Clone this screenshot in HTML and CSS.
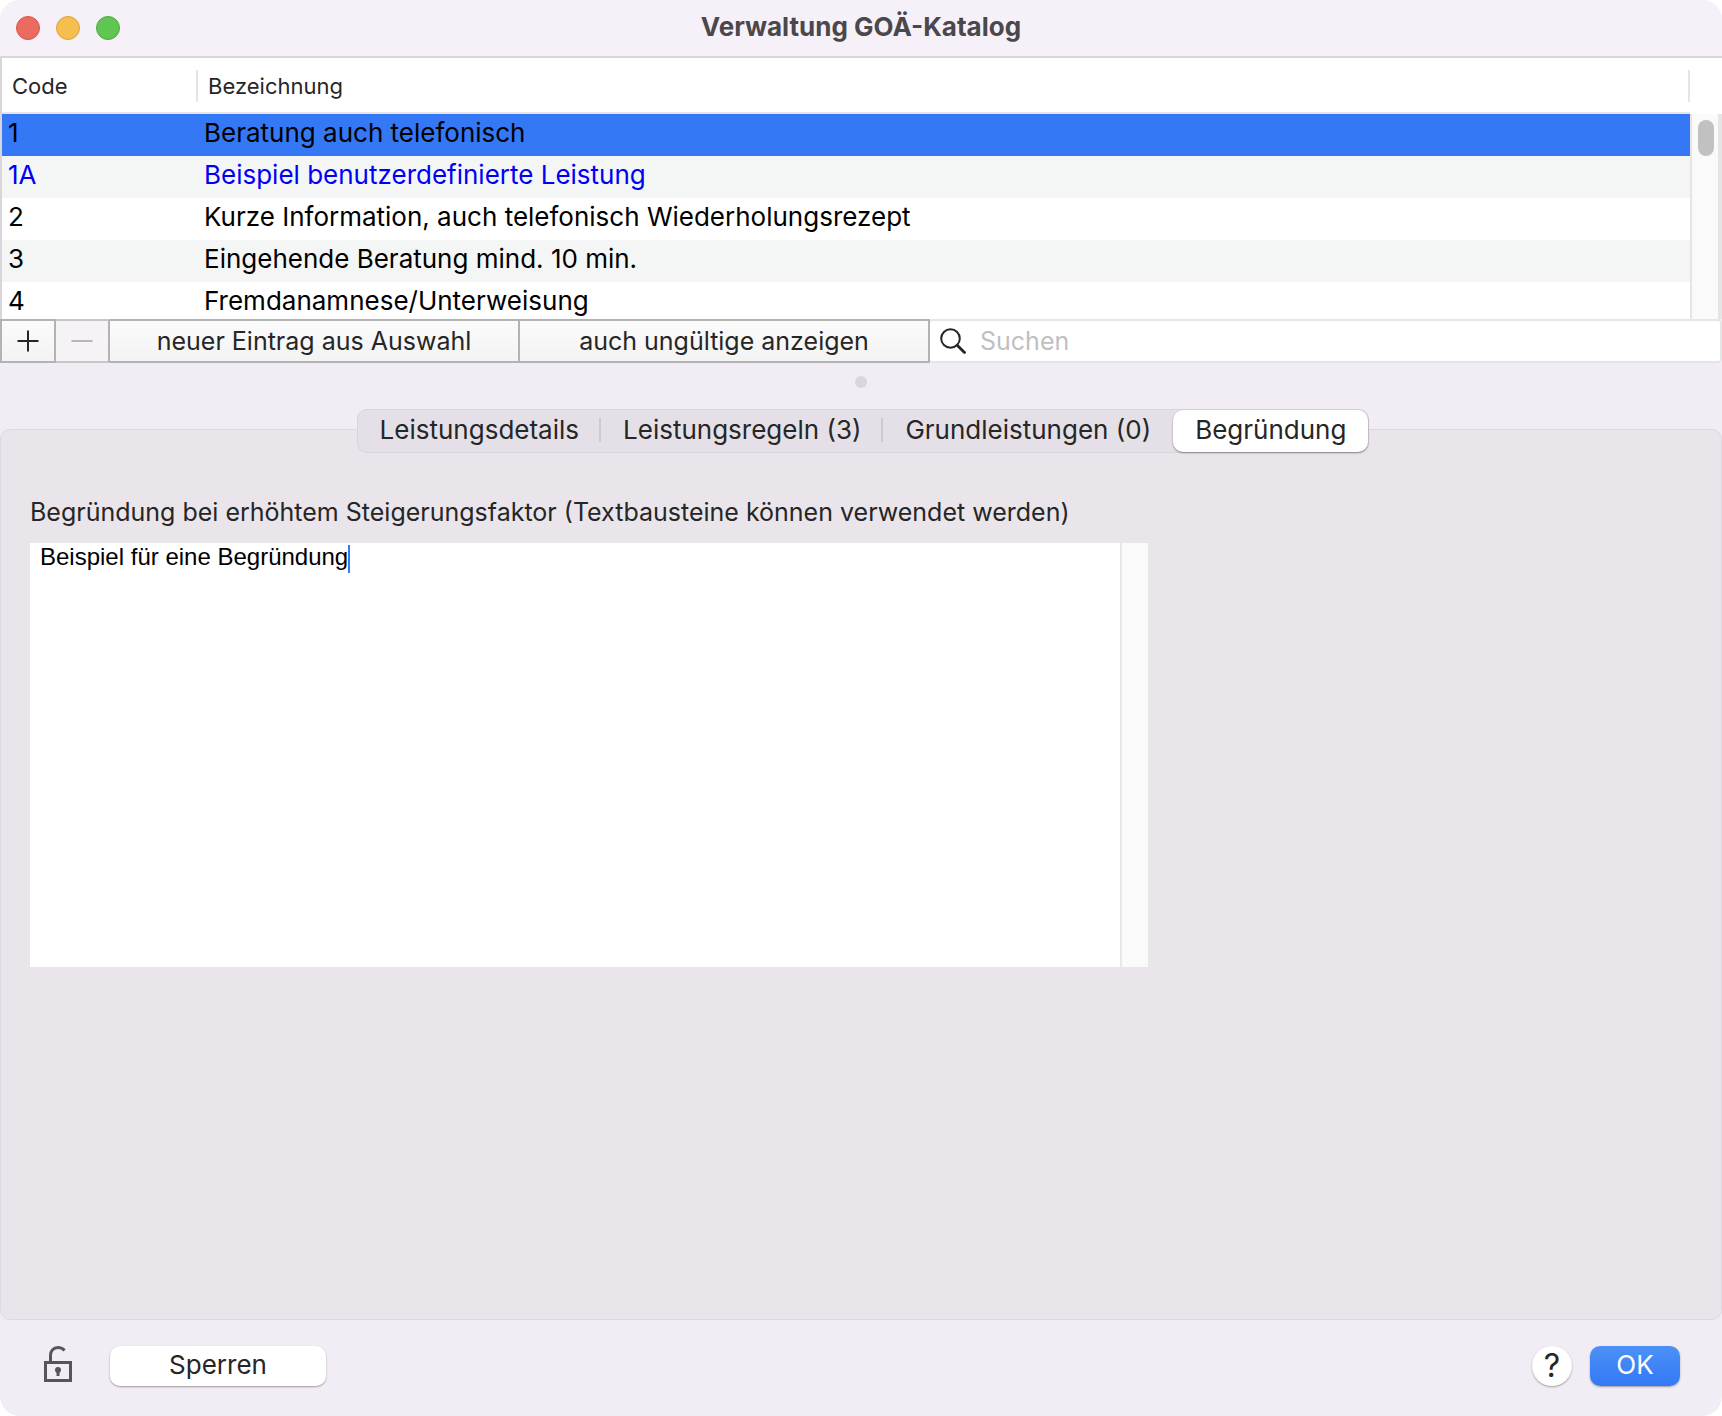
FILE: index.html
```html
<!DOCTYPE html>
<html lang="de">
<head>
<meta charset="utf-8">
<meta name="viewport" content="width=device-width, initial-scale=1">
<title>Verwaltung GOÄ-Katalog</title>
<link rel="stylesheet" href="styles.css">
</head>
<body>
<div class="window">
  <header class="titlebar">
    <div class="lights">
      <button class="light light-close" aria-label="Schließen"></button>
      <button class="light light-min" aria-label="Minimieren"></button>
      <button class="light light-zoom" aria-label="Zoomen"></button>
    </div>
    <h1 class="title">Verwaltung GOÄ-Katalog</h1>
  </header>

  <section class="list">
    <table class="catalog">
      <thead>
        <tr><th class="col-code" scope="col"><span>Code</span></th><th scope="col"><span>Bezeichnung</span></th></tr>
      </thead>
      <tbody>
        <tr class="selected"><td>1</td><td>Beratung auch telefonisch</td></tr>
        <tr class="custom"><td>1A</td><td>Beispiel benutzerdefinierte Leistung</td></tr>
        <tr><td>2</td><td>Kurze Information, auch telefonisch Wiederholungsrezept</td></tr>
        <tr><td>3</td><td>Eingehende Beratung mind. 10 min.</td></tr>
        <tr><td>4</td><td>Fremdanamnese/Unterweisung</td></tr>
      </tbody>
    </table>
    <div class="scroller"><div class="track"><div class="thumb"></div></div></div>
  </section>

  <div class="toolbar">
    <button class="tool tool-icon" aria-label="Hinzufügen">
      <svg width="22" height="22" viewBox="0 0 22 22"><path d="M11 0.500V21.500M0.500 11H21.500" stroke="#262626" stroke-width="2" fill="none"/></svg>
    </button>
    <button class="tool tool-icon tool-off" aria-label="Entfernen" disabled>
      <svg width="22" height="22" viewBox="0 0 22 22"><path d="M0.500 11H21.500" stroke="#b9b6bb" stroke-width="2" fill="none"/></svg>
    </button>
    <button class="tool tool-text">neuer Eintrag aus Auswahl</button>
    <button class="tool tool-text">auch ungültige anzeigen</button>
    <label class="search">
      <svg width="26" height="26" viewBox="0 0 26 26"><circle cx="10.500" cy="10.500" r="9.300" fill="none" stroke="#262626" stroke-width="2"/><path d="M17.200 17.200L24.500 24.500" stroke="#262626" stroke-width="2.800" stroke-linecap="round"/></svg>
      <input type="search" placeholder="Suchen" aria-label="Suchen">
    </label>
  </div>

  <div class="splitter"><span class="grip"></span></div>

  <div class="tabs" role="tablist">
    <button class="tab" role="tab">Leistungsdetails</button>
    <button class="tab" role="tab">Leistungsregeln (3)</button>
    <button class="tab" role="tab">Grundleistungen (0)</button>
    <button class="tab tab-active" role="tab" aria-selected="true">Begründung</button>
  </div>

  <main class="panel" role="tabpanel">
    <label class="caption" for="reason">Begründung bei erhöhtem Steigerungsfaktor (Textbausteine können verwendet werden)</label>
    <div class="editor">
      <textarea id="reason" class="reason" spellcheck="false">Beispiel für eine Begründung</textarea>
      <div class="editor-track"></div>
      <span class="caret"></span>
    </div>
  </main>

  <footer class="footer">
    <svg class="lock" width="28" height="36" viewBox="0 0 28 36">
      <path d="M6.500 16V9.500C6.500 5 9.500 1.500 14 1.500C17 1.500 19 2.600 20.500 4.500" fill="none" stroke="#575558" stroke-width="3"/>
      <rect x="1.500" y="16.500" width="25" height="18" fill="none" stroke="#575558" stroke-width="3"/>
      <circle cx="14" cy="24" r="3" fill="#575558"/><path d="M12.500 24H15.500V30H12.500Z" fill="#575558"/>
    </svg>
    <button class="push">Sperren</button>
    <button class="help" aria-label="Hilfe">?</button>
    <button class="push push-default">OK</button>
  </footer>
</div>
</body>
</html>
```
FILE: styles.css
```css
* { box-sizing: border-box; }

body {
  margin: 0;
  background: #fff;
  color: #262626;
  font: 26px/30px Inter, "Liberation Sans", sans-serif;
}

button, input { margin: 0; padding: 0; border: 0; font: inherit; color: inherit; }

.window {
  display: flex;
  flex-direction: column;
  min-height: 100vh;
  overflow: hidden;
  border-radius: 20px;
  background: #f2edf4;
}

/* Title bar */
.titlebar {
  display: grid;
  grid-template-columns: 1fr auto 1fr;
  align-items: center;
  height: 58px;
  padding: 0 16px;
  border-bottom: 2px solid #dad4dc;
  background: #f6f1f8;
}
.lights { display: flex; gap: 16px; }
.light { width: 24px; height: 24px; border: 1px solid; border-radius: 50%; }
.light-close { background: #ed6a5e; border-color: #d8564b; }
.light-min { background: #f5bf4f; border-color: #dba43c; }
.light-zoom { background: #61c554; border-color: #4faa41; }
.title { margin: 0; padding-bottom: 2px; font-size: 26px; line-height: 30px; font-weight: 700; color: #4b484c; }

/* Catalogue list */
.list {
  display: flex;
  height: 261px;
  overflow: hidden;
  border-left: 2px solid #dad4dc;
  background: #fff;
}
.catalog { flex: 1; align-self: flex-start; table-layout: fixed; border-spacing: 0; color: #000; }
.catalog th {
  height: 56px;
  padding: 2px 0 0;
  border-bottom: 2px solid #e5e5e5;
  text-align: left;
  font-size: 22px;
  font-weight: 400;
  color: #262626;
}
.catalog th span { display: block; padding-left: 10px; border-right: 2px solid #e5e5e5; line-height: 32px; }
.col-code { width: 196px; }
.catalog td { height: 42px; padding: 0 0 4px 6px; line-height: 38px; }
.catalog tr:nth-child(even) td { background: #f4f5f5; }
.catalog .selected td { background: #3478f6; }
.custom { color: #0000f5; }
.scroller { width: 32px; padding-top: 56px; }
.track {
  height: 100%;
  padding: 6px;
  border: solid #e5e5e5;
  border-width: 0 4px 0 2px;
  background: #fafafa;
}
.thumb { width: 16px; height: 36px; border-radius: 8px; background: #c1c1c1; }

/* Toolbar below the list */
.toolbar { display: flex; height: 44px; font-size: 25px; }
.tool {
  display: grid;
  place-items: center;
  border: 2px solid #b3b3b3;
  background: linear-gradient(#fbfbfb, #f3f3f3);
}
.tool + .tool { border-left-width: 0; }
.tool-icon { width: 56px; }
.tool-off { width: 54px; border-color: #c9c6ca #b3b3b3 #c9c6ca; background: #f6f3f7; }
.tool-text { width: 410px; }
.search {
  display: flex;
  flex: 1;
  align-items: center;
  gap: 14px;
  padding-left: 10px;
  border: solid #e5e5e5;
  border-width: 2px 2px 2px 0;
  border-radius: 4px;
  background: #fff;
}
.search input { flex: 1; min-width: 0; background: none; outline: 0; appearance: none; }
.search input::placeholder { color: #bfbfbf; opacity: 1; }

.splitter { display: grid; place-items: center; height: 38px; }
.grip { width: 12px; height: 12px; border-radius: 50%; background: #dad6dc; }

/* Tabs straddle the top edge of the panel */
.tabs {
  z-index: 1;
  display: flex;
  align-self: center;
  margin: 8px 0 -24px 4px;
  border: 1px solid #d9d3db;
  border-radius: 10px;
  background: #e5e0e7;
}
.tab {
  display: flex;
  align-items: center;
  height: 42px;
  padding: 0 0 2px 22px;
  background: none;
}
.tab::after { content: ""; width: 2px; height: 24px; margin-left: 20px; background: #cfcad1; }
.tab:nth-child(3)::after { background: none; }
.tab-active {
  padding: 0 22px 2px;
  border-radius: 10px;
  background: #fff;
  box-shadow: 0 1px 2px rgba(0, 0, 0, .4);
}
.tab-active::after { content: none; }

.panel {
  flex: 1;
  padding: 67px 29px 0;
  border: 1px solid #ded9e0;
  border-radius: 10px;
  background: #eae5eb;
}
.caption { display: block; margin-bottom: 16px; font-size: 25px; }
.editor { position: relative; display: flex; width: 1120px; max-width: 100%; height: 424px; background: #fff; }
.reason {
  flex: 1;
  padding: 0 10px;
  border: 0;
  outline: 0;
  resize: none;
  background: #fff;
  color: #000;
  font: 24px/28px "Liberation Sans", Arial, sans-serif;
}
.editor-track { width: 30px; border: solid #e8e8e8; border-width: 0 2px; background: #fafafa; }
.caret { position: absolute; top: 2px; left: 318px; width: 2px; height: 28px; background: #3478f6; }

/* Footer */
.footer { display: flex; align-items: center; height: 96px; padding: 0 42px 4px 44px; }
.lock { margin: 0 38px 4px 0; }
.push {
  width: 216px;
  height: 40px;
  padding-bottom: 2px;
  border-radius: 10px;
  background: #fff;
  box-shadow: 0 1px 2px rgba(0, 0, 0, .35);
}
.help {
  width: 40px;
  height: 40px;
  margin: 0 18px 0 auto;
  border-radius: 50%;
  background: #fff;
  box-shadow: 0 1px 2px rgba(0, 0, 0, .35);
  font-size: 32px;
}
.push-default { width: 90px; background: linear-gradient(#4b91f7, #3478f6); color: #fff; }
```
